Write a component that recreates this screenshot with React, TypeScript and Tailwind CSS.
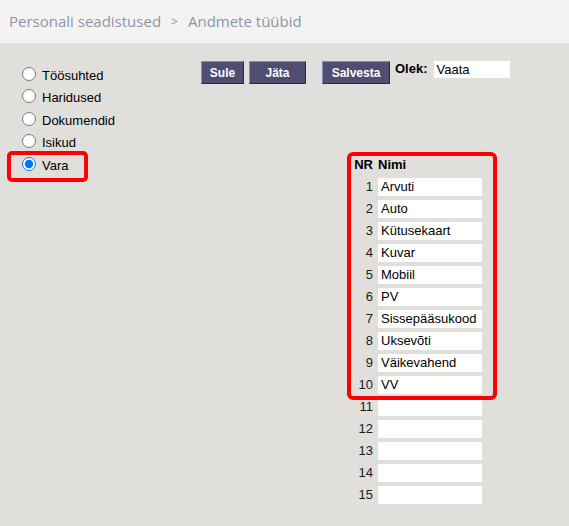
const groups = ["Töösuhted", "Haridused", "Dokumendid", "Isikud", "Vara"];

const rows = [
  "Arvuti",
  "Auto",
  "Kütusekaart",
  "Kuvar",
  "Mobiil",
  "PV",
  "Sissepääsukood",
  "Uksevõti",
  "Väikevahend",
  "VV",
  "",
  "",
  "",
  "",
  "",
];

function Btn({ label, w }: { label: string; w: string }) {
  return (
    <button
      className={`h-[23px] ${w} bg-[#504d72] text-white text-[12px] font-bold border border-t-[#8f8cab] border-l-[#8f8cab] border-b-[#2b2940] border-r-[#2b2940]`}
    >
      {label}
    </button>
  );
}

export default function App() {
  return (
    <div className="min-h-[526px] bg-[#e0dfdb] font-['Liberation_Sans',Arial,sans-serif] text-[13px] text-black">
      <div className="h-[43px] bg-[#f4f3f1] flex items-center px-[9px] text-[15px] text-[#8b96a9] font-['Open_Sans',sans-serif]">
        <span>Personali seadistused</span>
        <span className="mx-[10px] text-[12px]">&gt;</span>
        <span>Andmete tüübid</span>
      </div>

      <div className="flex">
        <div className="w-[201px] pl-[22px] pt-[21px]">
          {groups.map((g) => (
            <label key={g} className="relative flex items-center gap-[6px] h-[22.5px]">
              <input
                type="radio"
                name="grp"
                defaultChecked={g === "Vara"}
                className="w-[14px] h-[14px] m-0 mb-[3px]"
              />
              <span>{g}</span>
              {g === "Vara" && (
                <span className="absolute left-[-15px] top-[-3px] w-[81px] h-[31px] border-4 border-[#ff0000] rounded-[5px] pointer-events-none" />
              )}
            </label>
          ))}
        </div>

        <div className="flex flex-col">
          <div className="flex items-start mt-[18px]">
            <Btn label="Sule" w="w-[43px]" />
            <div className="w-[5px]" />
            <Btn label="Jäta" w="w-[57px]" />
            <div className="w-[16px]" />
            <Btn label="Salvesta" w="w-[68px]" />
            <span className="ml-[5px] font-bold leading-[15px]">Olek:</span>
            <div className="ml-[6px] w-[76px] h-[17px] bg-white pl-[3px] leading-[17px]">Vaata</div>
          </div>

          <div className="relative ml-[146px] mt-[68px] pt-[4px] pl-[4px]">
            <div className="grid grid-cols-[22px_104px] gap-x-[5px] gap-y-[4px]">
              <div className="h-[18px] flex items-center justify-end font-bold">NR</div>
              <div className="h-[18px] flex items-center font-bold">Nimi</div>
              {rows.map((r, i) => (
                <div key={i} className="contents">
                  <div className="h-[18px] flex items-center justify-end text-[#1a1a1a]">{i + 1}</div>
                  <div className="h-[18px] bg-white pl-[3px] flex items-center">{r}</div>
                </div>
              ))}
            </div>
            <div className="absolute left-0 top-0 w-[150px] h-[248px] border-4 border-[#ff0000] rounded-[6px] pointer-events-none" />
          </div>
        </div>
      </div>
    </div>
  );
}
